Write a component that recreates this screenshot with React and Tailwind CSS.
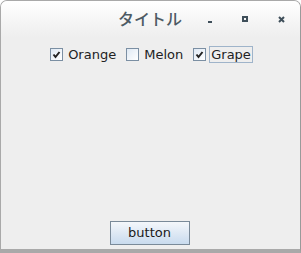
import React from "react";

function Check({ checked }) {
  return (
    <span className="relative flex h-[13px] w-[13px] items-center justify-center border border-[#7b8fa3] bg-[linear-gradient(135deg,_#dfe9f4_0%,_#ffffff_100%)]">
      {checked && (
        <svg width="9" height="9" viewBox="0 0 9 9">
          <path d="M1.5 4.5 L3.5 7 L7.5 2" fill="none" stroke="#222" strokeWidth="2" />
        </svg>
      )}
    </span>
  );
}

function Item({ label, checked, focused }) {
  return (
    <div className="flex items-center gap-[3px]">
      <Check checked={checked} />
      <span
        className={
          focused
            ? "border border-[#9fb4ca] px-[1px] leading-[15px]"
            : "border border-transparent px-[1px] leading-[15px]"
        }
      >
        {label}
      </span>
    </div>
  );
}

export default function App() {
  return (
    <div className="h-[253px] w-[301px] bg-white">
      <div className="flex h-[253px] w-[301px] flex-col rounded-t-[7px] border-x border-b-[4px] border-t border-[#a9a9a9] border-r-[#9a9a9a] bg-[#eeeeee]">
        <div className="relative flex h-[36px] items-center rounded-t-[6px] bg-[linear-gradient(180deg,_#ffffff_0%,_#eeeeee_100%)]">
          <span className="absolute left-[117px] top-[6px] font-['Noto_Sans_CJK_JP',sans-serif] text-[16px] font-medium leading-[22px] text-[#4d5a64]">
            タイトル
          </span>
          <span className="absolute left-[207px] top-[20px] h-[2px] w-[4px] bg-[#3f4f5a]" />
          <span className="absolute left-[241px] top-[15px] h-[6px] w-[6px] border-[2px] border-[#3f4f5a]" />
          <svg className="absolute left-[277px] top-[15px]" width="7" height="7" viewBox="0 0 7 7">
            <path d="M1 1 L6 6 M6 1 L1 6" stroke="#3f4f5a" strokeWidth="2" />
          </svg>
        </div>
        <div className="flex flex-1 flex-col items-center font-['DejaVu_Sans',sans-serif] text-[13px] text-[#222]">
          <div className="mt-[9px] flex items-center gap-[8px] pl-[2px]">
            <Item label="Orange" checked />
            <Item label="Melon" />
            <Item label="Grape" checked focused />
          </div>
          <div className="flex-1" />
          <button
            type="button"
            className="mb-[4px] mr-[2px] h-[24px] w-[80px] border border-[#7a8a99] bg-[linear-gradient(180deg,_#f4f7fb_0%,_#c9dbee_100%)] font-['DejaVu_Sans',sans-serif] text-[13px] text-[#1a1a1a]"
          >
            button
          </button>
        </div>
      </div>
    </div>
  );
}
